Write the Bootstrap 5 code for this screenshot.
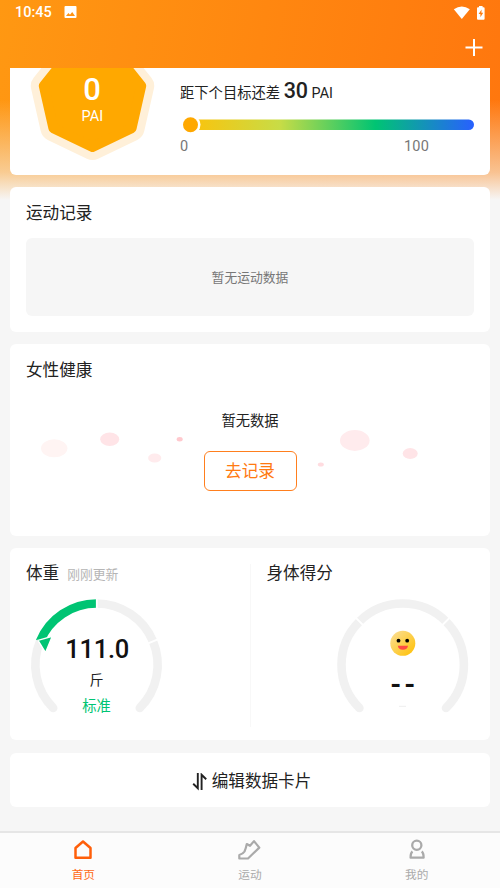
<!DOCTYPE html>
<html lang="zh-CN">
<head>
<meta charset="utf-8">
<meta name="viewport" content="width=device-width, initial-scale=1">
<title>首页</title>
<link href="https://cdn.jsdelivr.net/npm/bootstrap@5.3.0/dist/css/bootstrap.min.css" rel="stylesheet">
<style>
body{font-family:Roboto,"Noto Sans CJK SC",sans-serif;background:#f6f6f6;color:#222;line-height:1.2}
.screen{width:500px;height:888px;background:#f6f6f6}
.glow{left:0;top:0;width:500px;height:200px;background:linear-gradient(100deg,#ff9812,#ff760e)}
.glow::after{content:"";position:absolute;inset:0;background:linear-gradient(180deg,rgba(246,246,246,0) 50%,rgba(246,226,200,.7) 86%,#f6f6f6 100%)}
.topbar{height:68px;color:#fff}
.statusbar{height:25px;padding:0 13px 0 15px}
.clock{font-size:14.5px;font-weight:500;padding-top:1px}
.plus{margin-top:-2px}
.feed{gap:12px;padding:0 10px}
.tile{background:#fff;border-radius:6px}
.t-pai{height:107px;border-radius:0 0 6px 6px;padding:0 16px 0 20px}
.t-sport{height:145px;padding:16px 16px 15px}
.t-women{height:192px;padding:16px 16px}
.t-body{height:192px}
.t-body .half{width:240px;padding:15px 0 0 16px}
.t-edit{height:54px;font-size:16.6px;margin-top:1px;padding:3px 0 0 3px}
.ttl{font-size:16.6px;line-height:22px;height:22px}
.empty{background:#f6f6f6;border-radius:6px;height:78px;font-size:12.8px;color:#777;margin-top:13px;padding-top:2px}
.goal{font-size:14.3px;line-height:24px}
.goal b{font-size:21.5px;font-weight:500}
.pai-goal{padding-top:11px}
.pai-track{margin-top:10px}
.scale{font-size:14.5px;color:#777;line-height:18px;letter-spacing:.2px;padding:3px 45px 0 0}
.nodata{margin:27px 0 17.5px}
.record{width:93px;height:40px;border:1.5px solid #ff7f1e;border-radius:6px;color:#ff7a12;font-size:16.6px;padding-top:2px}
.note{font-size:12.8px;color:#b5b5b5}
.dial{margin-top:9px}
.right-dial{margin-left:66px}
.divide{width:1px;background:#f8f8f8;margin:16px 0 13px}
.tabs{height:57px;margin-top:24px;background:#fcfcfc;border-top:2px solid #e6e6e6;font-size:11.7px;color:#aaa}
.tabs .on{color:#ff6a14}
svg{display:block}
svg text{font-family:Roboto,"Noto Sans CJK SC",sans-serif}
</style>
</head>
<body>
<div class="screen position-relative overflow-hidden">
  <div class="glow position-absolute"></div>
  <div class="position-relative d-flex flex-column">
    <header class="topbar">
      <div class="statusbar d-flex align-items-center justify-content-between">
        <div class="d-flex align-items-center">
          <span class="clock">10:45</span>
          <svg class="ms-2" width="18" height="14" viewBox="0 0 18 14"><path fill="#fff" fill-rule="evenodd" d="M5.500 1h10q1 0 1 1v10q0 1-1 1h-10q-1 0-1-1V2q0-1 1-1ZM6 11h9l-2.800-3.900-2.200 2.700-1.600-1.700Z"/></svg>
        </div>
        <svg width="34" height="16" viewBox="0 0 34 16"><path fill="#fff" d="M.8 4.200Q8.800-1.200 16.800 4.200L8.800 14Z"/><path fill="#fff" d="M26 1h3.600v1.300h1q1 0 1 1v10.400q0 1-1 1h-5.600q-1 0-1-1V3.300q0-1 1-1h1Z"/><path fill="#ff7d10" d="M28.600 4.500 25.600 9h1.800v3.300l2.800-4.500h-1.800Z"/></svg>
      </div>
      <div class="d-flex justify-content-end pe-3 pt-3">
        <svg class="plus" width="20" height="18" viewBox="0 0 20 18"><path stroke="#fff" stroke-width="2" d="M1.500 8.500h17M10 0v17"/></svg>
      </div>
    </header>
    <main class="feed d-flex flex-column">
      <section class="tile t-pai d-flex">
        <svg width="126" height="107" viewBox="30 68 126 107">
          <path fill="#fff0d9" stroke="#fff0d9" stroke-width="26" stroke-linejoin="round" d="M92.500 147 53.400 128.200 43.800 85.900 70.800 52h43.400L141.200 85.900 131.600 128.200Z"/>
          <path fill="#ffa800" stroke="#ffa800" stroke-width="10" stroke-linejoin="round" d="M92.500 147 53.400 128.200 43.800 85.900 70.800 52h43.400L141.200 85.900 131.600 128.200Z"/>
          <text x="92" y="100" text-anchor="middle" font-size="31" font-weight="500" fill="#fff">0</text>
          <text x="92.300" y="121" text-anchor="middle" font-size="14.500" fill="#fff">PAI</text>
        </svg>
        <div class="flex-grow-1 ps-4">
          <div class="goal pai-goal">距下个目标还差 <b>30</b> PAI</div>
          <svg class="pai-track" width="294" height="20" viewBox="180 115 294 20">
            <defs><linearGradient id="g"><stop offset="0" stop-color="#ffc107"/><stop offset=".33" stop-color="#c8dc46"/><stop offset=".66" stop-color="#00c473"/><stop offset="1" stop-color="#2860ff"/></linearGradient></defs>
            <rect x="184" y="119.500" width="290" height="10.500" rx="5.200" fill="url(#g)"/><circle cx="190.500" cy="124.800" r="10" fill="#fff"/><circle cx="190.500" cy="124.800" r="7.500" fill="#ffa800"/>
          </svg>
          <div class="scale d-flex justify-content-between"><span>0</span><span>100</span></div>
        </div>
      </section>
      <section class="tile t-sport">
        <div class="ttl">运动记录</div>
        <div class="empty d-flex align-items-center justify-content-center">暂无运动数据</div>
      </section>
      <section class="tile t-women position-relative">
        <svg class="position-absolute start-0 top-0" width="480" height="192" viewBox="10 344 480 192">
          <g fill="#ffe4e7"><ellipse cx="54.200" cy="448.300" rx="13.200" ry="9" fill="#fff4f3"/><ellipse cx="109.700" cy="439.300" rx="9.500" ry="6.700"/><ellipse cx="154.700" cy="458" rx="6.600" ry="4.600" fill="#ffebed"/><ellipse cx="179.700" cy="439.200" rx="3" ry="2.200" fill="#ffc9ce"/><ellipse cx="320.800" cy="464.500" rx="3" ry="2.100" fill="#ffdce0"/><ellipse cx="354.800" cy="440.500" rx="14.800" ry="10.400" fill="#ffebed"/><ellipse cx="410.200" cy="453.500" rx="7.500" ry="5.400"/></g>
        </svg>
        <div class="position-relative">
          <div class="ttl">女性健康</div>
          <div class="goal nodata text-center">暂无数据</div>
          <div class="record d-flex align-items-center justify-content-center mx-auto">去记录</div>
        </div>
      </section>
      <section class="tile t-body d-flex">
        <div class="half">
          <div class="ttl">体重<span class="note ms-2">刚刚更新</span></div>
          <svg class="dial" width="140" height="125" viewBox="26 594 140 125">
            <g fill="none" stroke="#f1f1f1" stroke-width="8.600"><path stroke-linecap="round" d="M53.200 708A61.200 61.200 0 0 1 40 641.300M139.800 708A61.200 61.200 0 0 0 153 641.300"/><path d="M96.500 603.500A61.200 61.200 0 0 1 153 641.300"/><path stroke="#00c473" d="M96.500 603.500A61.200 61.200 0 0 0 40 641.300"/></g>
            <path stroke="#fff" stroke-width="1.800" d="M96.800 598v11M147 643.800l12-5"/>
            <path fill="#00c473" stroke="#fff" stroke-width="1.400" d="M38 640.300 52.300 636.300 45.500 652.700Z"/>
            <text x="97.300" y="658" text-anchor="middle" font-size="25.500" font-weight="500" textLength="64" fill="#111">111.0</text>
            <text x="96.500" y="684.500" text-anchor="middle" font-size="14" fill="#222">斤</text>
            <text x="96.500" y="711" text-anchor="middle" font-size="14.300" fill="#00c473">标准</text>
          </svg>
        </div>
        <div class="divide"></div>
        <div class="half">
          <div class="ttl">身体得分</div>
          <svg class="dial right-dial" width="140" height="125" viewBox="333 594 140 125">
            <defs><linearGradient id="f" x1="0" y1="0" x2="1" y2="1"><stop offset=".1" stop-color="#fbdc8b"/><stop offset="1" stop-color="#ffc000"/></linearGradient></defs>
            <path fill="none" stroke="#f1f1f1" stroke-width="8.600" stroke-linecap="round" d="M359.400 708A61.200 61.200 0 1 1 446 708"/>
            <path stroke="#fff" stroke-width="1.800" d="m355 617 9 9M450.400 617l-9 9"/>
            <circle cx="402.800" cy="643.300" r="12.500" fill="url(#f)"/><circle cx="398.500" cy="640.700" r="1.900"/><circle cx="407.200" cy="640.700" r="1.900"/><path fill="#ff4b43" d="M397.800 645.800h10.200q-.6 4-5.100 4t-5.100-4Z"/>
            <text x="390.300 404.300" y="694" font-size="28" font-weight="700" fill="#111">--</text>
            <path stroke="#eee" d="M399 706.300h7"/>
          </svg>
        </div>
      </section>
      <section class="tile t-edit d-flex align-items-center justify-content-center">
        <svg width="16" height="18" viewBox="192 771 16 18"><path fill="none" stroke="#222" stroke-width="1.900" d="M197.800 771v15.300l-4.600-4.500M201.600 788v-15.300l4.600 4.500"/></svg><span class="ms-1">编辑数据卡片</span>
      </section>
    </main>
    <nav class="tabs row g-0 text-center">
      <div class="col on"><svg class="mx-auto" width="26" height="35" viewBox="70 833 26 35"><path fill="none" stroke="#ff5f0a" stroke-width="2.500" stroke-linejoin="round" d="M75.500 857.700v-9.700l7.500-6.500 7.500 6.500v9.700Z"/></svg>首页</div>
      <div class="col"><svg class="mx-auto" width="26" height="35" viewBox="237 833 26 35"><path fill="none" stroke="#aaa" stroke-width="2.200" stroke-linejoin="round" d="M239.300 858.500v-3.500q3.700-1 5.200-3.500 1.500-3.500 2.300-7.500l3.200 1.800 4-4.700 5.300 6.500-11.300 10.900Z"/></svg>运动</div>
      <div class="col"><svg class="mx-auto" width="26" height="35" viewBox="403.500 833 26 35"><g fill="none" stroke="#aaa" stroke-width="2.300" stroke-linejoin="round"><circle cx="416.300" cy="845.200" r="4.600"/><path d="M412 851.500q-2 1.500-1.900 6.200h13q.1-4.700-1.900-6.200"/></g></svg>我的</div>
    </nav>
  </div>
</div>
<script src="https://cdn.jsdelivr.net/npm/bootstrap@5.3.0/dist/js/bootstrap.bundle.min.js"></script>
</body>
</html>
